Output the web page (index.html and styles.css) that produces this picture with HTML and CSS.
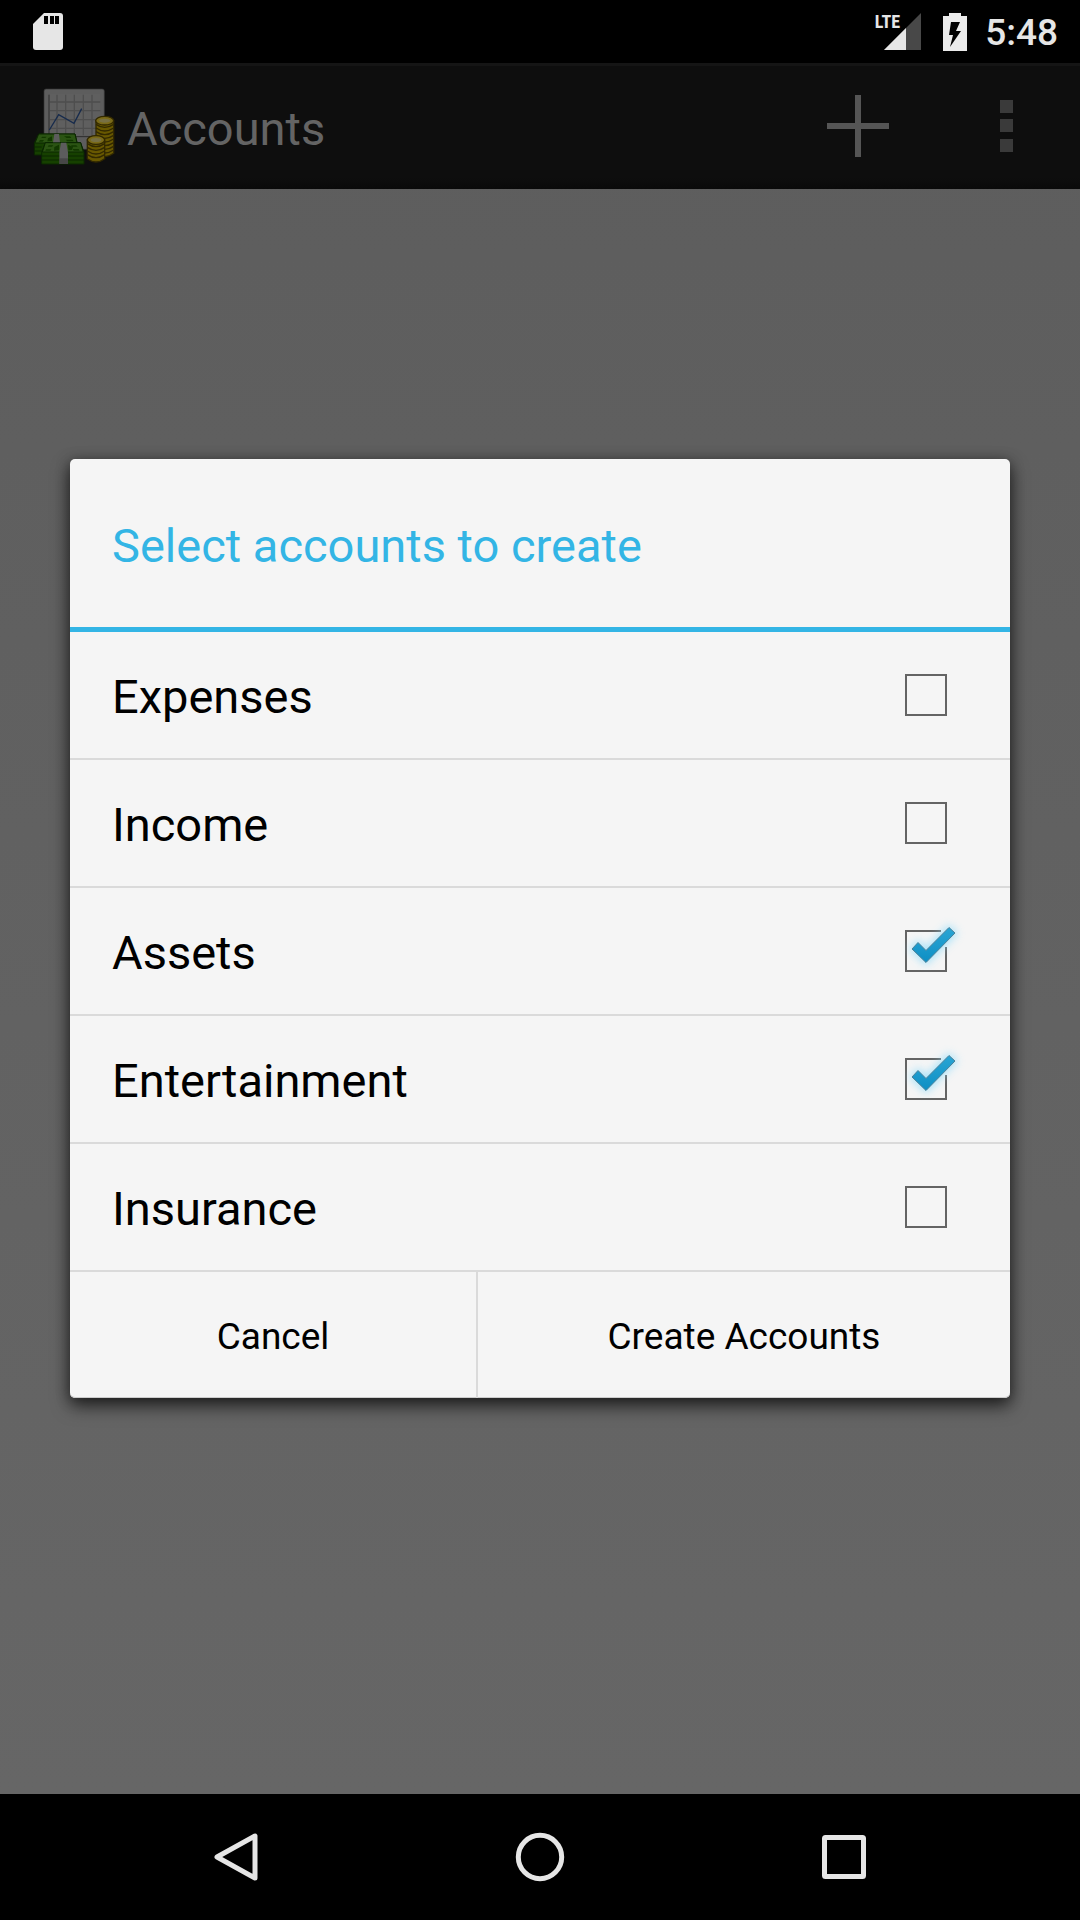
FILE: index.html
```html
<!DOCTYPE html>
<html lang="en">
<head>
<meta charset="utf-8">
<meta name="viewport" content="width=device-width, initial-scale=1">
<title>Accounts</title>
<link rel="stylesheet" href="styles.css">
</head>
<body>
<header class="status-bar">
  <svg class="icon-sd" width="32" height="40" viewBox="0 0 32 40" aria-hidden="true">
    <path fill="#e6e6e6" d="M12 1H28Q31 1 31 4V35Q31 38 28 38H4Q1 38 1 35V12Z"/>
    <path fill="#000" d="M12 4h4v8h-4zM18 4h4v8h-4zM23 4h4v8h-4z"/>
  </svg>
  <div class="status-icons">
    <div class="signal">
      <svg width="37" height="37" viewBox="0 0 37 37" aria-hidden="true">
        <path fill="#484848" d="M37 0V37H0Z"/>
        <path fill="#e6e6e6" d="M22 15V37H0Z"/>
      </svg>
      <span class="network">LTE</span>
    </div>
    <svg class="icon-battery" width="24" height="38" viewBox="0 0 24 38" aria-hidden="true">
      <path fill="#ebebeb" d="M6 0H18V3H24V38H0V3H6Z"/>
      <path fill="#000" d="M8 9H17L13 18H18L7 34L10 22H6Z"/>
    </svg>
    <time class="clock">5:48</time>
  </div>
</header>

<div class="window">
  <div class="app">
    <header class="action-bar">
      <svg class="logo" width="82" height="78" viewBox="39 51 246 234" aria-hidden="true">
        <rect x="72" y="57" width="181" height="181" rx="6" fill="#5d5d5d" stroke="#333" stroke-width="2"/>
        <rect x="84" y="72" width="158" height="125" fill="#5f5f5f"/>
        <path d="M111 74V196M137 74V196M163 74V196M190 74V196M216 74V196M90 96H241M90 122H241M90 149H241M90 175H241" stroke="#4e4e4e" stroke-width="4" fill="none"/>
        <path d="M87 74V200H241" stroke="#2d2d2d" stroke-width="3" fill="none"/>
        <path d="M88 180L116 134L162 160L185 116" stroke="#172b4c" stroke-width="4" fill="none"/>
        <g stroke="#322900" stroke-width="4" fill="#685800">
          <path d="M228 152V250Q254 270 281 250V152Z"/>
          <path fill="none" d="M228 163Q254 181 281 163M228 174Q254 192 281 174M228 185Q254 203 281 185M228 196Q254 214 281 196M228 207Q254 225 281 207M228 218Q254 236 281 218M228 229Q254 247 281 229M228 240Q254 258 281 240"/>
          <ellipse cx="254" cy="152" rx="27" ry="13" fill="#7a6a18"/>
          <path d="M202 210V266Q228 286 254 266V210Z"/>
          <path fill="none" d="M202 221Q228 239 254 221M202 232Q228 250 254 232M202 243Q228 261 254 243M202 254Q228 272 254 254"/>
          <ellipse cx="228" cy="210" rx="26" ry="13" fill="#7a6a18"/>
        </g>
        <g fill="#777044">
          <ellipse cx="254" cy="152" rx="17" ry="6"/>
          <ellipse cx="228" cy="210" rx="16" ry="6"/>
        </g>
        <g stroke="#0a2600" stroke-width="3">
          <path fill="#164000" d="M43 219L56 192H165L172 220V255H43Z"/>
          <path fill="#2b5413" d="M45 219L56 192H165L171 219Z"/>
          <path d="M43 231H65M43 243H65" fill="none"/>
          <path fill="#164000" d="M65 247L76 218H182L192 247V282H65Z"/>
          <path fill="#2b5413" d="M67 246L76 218H182L190 246Z"/>
          <path d="M65 258H192M65 270H192" fill="none"/>
        </g>
        <path fill="#123800" d="M66 200h14l-4 4h-12zM60 210h12l-4 5h-12zM132 199h18l4 5h-14zM138 209h20l3 5h-20zM84 205l12-6v14l-14 1zM86 226h14l-4 4h-13zM78 238h16l-3 4h-15zM153 226h16l4 4h-17zM158 237h18l3 5h-18zM103 231l14-7v17l-15 1zM144 224l15 7-3 9-11 1z"/>
        <path fill="#5c5c5c" d="M103 192H117L120 217H99ZM123 218H139L144 247V282H118V247Z"/>
        <path fill="#393939" d="M118 265H144V282H118Z" opacity=".6"/>
      </svg>
      <h1 class="bar-title">Accounts</h1>
      <button class="bar-action" type="button" aria-label="Add account">
        <svg width="62" height="62" viewBox="0 0 62 62" aria-hidden="true"><path fill="#555" d="M28 0h6v28h28v6H34v28h-6V34H0v-6h28z"/></svg>
      </button>
      <button class="bar-menu" type="button" aria-label="More options">
        <svg width="14" height="52" viewBox="0 0 14 52" aria-hidden="true"><path fill="#3a3a3a" d="M0 0h13v13H0zM0 19h13v13H0zM0 39h13v13H0z"/></svg>
      </button>
    </header>
  </div>

  <div class="overlay">
    <form class="dialog" role="dialog" aria-labelledby="dialog-title">
      <h2 class="dialog-title" id="dialog-title">Select accounts to create</h2>
      <ul class="choices">
        <li><label class="choice"><span class="choice-name">Expenses</span><span class="tick-box"><input type="checkbox"></span></label></li>
        <li><label class="choice"><span class="choice-name">Income</span><span class="tick-box"><input type="checkbox"></span></label></li>
        <li><label class="choice"><span class="choice-name">Assets</span><span class="tick-box"><input type="checkbox" checked><svg class="tick" viewBox="-14 -18 80 80" aria-hidden="true"><use href="#tick-shape"/></svg></span></label></li>
        <li><label class="choice"><span class="choice-name">Entertainment</span><span class="tick-box"><input type="checkbox" checked><svg class="tick" viewBox="-14 -18 80 80" aria-hidden="true"><use href="#tick-shape"/></svg></span></label></li>
        <li><label class="choice"><span class="choice-name">Insurance</span><span class="tick-box"><input type="checkbox"></span></label></li>
      </ul>
      <div class="dialog-buttons">
        <button class="cancel" type="button">Cancel</button>
        <button class="create" type="submit">Create Accounts</button>
      </div>
    </form>
  </div>
</div>

<nav class="nav-bar">
  <button type="button" aria-label="Back"><svg width="50" height="50" viewBox="0 0 50 50" aria-hidden="true"><path d="M42 4V46L4 25Z" class="nav-line"/></svg></button>
  <button type="button" aria-label="Home"><svg width="50" height="50" viewBox="0 0 50 50" aria-hidden="true"><circle cx="25" cy="25" r="21.7" class="nav-line"/></svg></button>
  <button type="button" aria-label="Overview"><svg width="50" height="50" viewBox="0 0 50 50" aria-hidden="true"><rect x="7.500" y="5.500" width="39" height="39" rx="1" class="nav-line"/></svg></button>
</nav>

<svg class="shapes" width="0" height="0" aria-hidden="true">
  <defs>
    <linearGradient id="tick-fill" x1="0" y1="0" x2="0" y2="1">
      <stop offset="0" stop-color="#2aa5d4"/>
      <stop offset="1" stop-color="#0e8fc4"/>
    </linearGradient>
    <filter id="tick-glow" x="-50%" y="-50%" width="200%" height="200%"><feGaussianBlur stdDeviation="4"/></filter>
    <g id="tick-shape">
      <path fill="#f5f5f5" d="M36 -2H44V17H36Z"/>
      <path fill="#8fdcfa" stroke="#8fdcfa" stroke-width="4" opacity=".75" filter="url(#tick-glow)" d="M7 19L13 12.500L21 20.500L44 -2.500L50 3L21 32.500Z"/>
      <path fill="url(#tick-fill)" stroke="#4b8199" stroke-width="1" d="M7 19L13 12.500L21 20.500L44 -2.500L50 3L21 32.500Z"/>
    </g>
  </defs>
</svg>
</body>
</html>
```

FILE: styles.css
```css
* {
  box-sizing: border-box;
}

body {
  margin: 0;
  min-height: 100vh;
  display: flex;
  flex-direction: column;
  background: #000;
  color: #000;
  font-family: Roboto, "Noto Sans", sans-serif;
  font-size: 47px;
}

button {
  border: 0;
  padding: 0;
  background: none;
  color: inherit;
  font: inherit;
  cursor: pointer;
}

svg {
  display: block;
}

h1,
h2,
ul {
  margin: 0;
  padding: 0;
  font-size: inherit;
  font-weight: 400;
  list-style: none;
}

/* Status bar */
.status-bar {
  height: 63px;
  display: flex;
  align-items: center;
  justify-content: space-between;
  padding: 0 22px 0 32px;
  color: #e6e6e6;
}

.status-icons {
  display: flex;
  align-items: center;
  gap: 18px;
}

.signal {
  position: relative;
  margin-right: 4px;
}

.network {
  position: absolute;
  right: 21px;
  top: 0;
  font: bold 18px/18px "Roboto Condensed", "Liberation Sans Narrow", Roboto, sans-serif;
}

.clock {
  font-size: 37px;
  font-weight: 500;
  line-height: 40px;
  padding-top: 2px;
}

/* Window with the dimmed app behind the dialog */
.window {
  flex: 1;
  display: grid;
}

.app,
.overlay {
  grid-area: 1 / 1;
}

.app {
  background: linear-gradient(#5d5d5d, #666);
}

.action-bar {
  height: 126px;
  display: flex;
  align-items: center;
  padding: 0 31px 0 33px;
  background: linear-gradient(#151515 0 3px, #0e0e0e 3px 115px, #0a0a0a);
  color: #646464;
}

.bar-title {
  flex: 1;
  padding: 4px 0 0 12px;
}

.bar-action,
.bar-menu {
  display: grid;
  place-items: center;
  height: 126px;
}

.bar-action {
  width: 168px;
}

.bar-menu {
  width: 84px;
  margin-left: 23px;
}

/* Dialog */
.overlay {
  display: grid;
  align-items: center;
  padding: 70px;
}

.dialog {
  background: #f5f5f5;
  border-radius: 5px;
  box-shadow: 0 8px 18px rgba(0, 0, 0, .6), 0 2px 14px rgba(0, 0, 0, .35), inset 0 -1px #ccc;
}

.dialog-title {
  padding: 57px 42px 51px;
  border-bottom: 5px solid #33b5e5;
  color: #33b5e5;
  line-height: 60px;
}

.choice {
  height: 128px;
  display: flex;
  align-items: center;
  justify-content: space-between;
  padding: 0 63px 0 42px;
  border-bottom: 2px solid #dadada;
}

.choice-name {
  padding-top: 3px;
}

.tick-box {
  position: relative;
}

.tick-box input {
  appearance: none;
  display: block;
  width: 42px;
  height: 42px;
  margin: 0;
  border: 2px solid #646464;
}

.tick {
  position: absolute;
  left: -14px;
  top: -18px;
  width: 80px;
  height: 80px;
  pointer-events: none;
}

.dialog-buttons {
  display: grid;
  grid-template-columns: 408fr 532fr;
  font-size: 37px;
}

.dialog-buttons button {
  height: 126px;
  padding-top: 3px;
}

.dialog-buttons .cancel {
  border-right: 2px solid #dadada;
}

/* Navigation bar */
.nav-bar {
  height: 126px;
  display: grid;
  grid-template-columns: repeat(3, 1fr);
  padding: 0 87px;
}

.nav-bar button {
  display: grid;
  place-items: center;
}

.nav-line {
  fill: none;
  stroke: #e6e6e6;
  stroke-width: 5;
  stroke-linejoin: round;
}

.shapes {
  position: absolute;
}
```
